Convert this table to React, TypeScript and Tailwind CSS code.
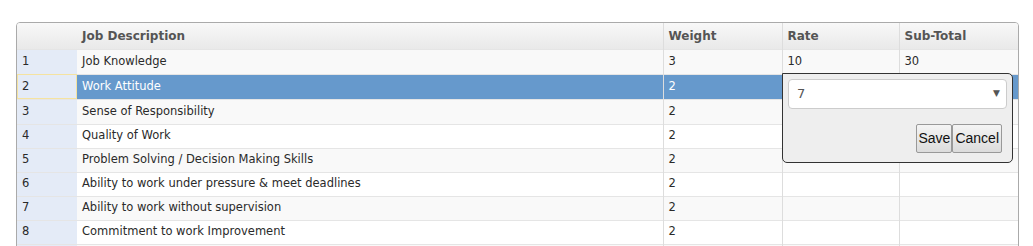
import React from 'react';

const rows = [
  { n: '1', desc: 'Job Knowledge', weight: '3', rate: '10', sub: '30' },
  { n: '2', desc: 'Work Attitude', weight: '2', rate: '', sub: '' },
  { n: '3', desc: 'Sense of Responsibility', weight: '2', rate: '', sub: '' },
  { n: '4', desc: 'Quality of Work', weight: '2', rate: '', sub: '' },
  { n: '5', desc: 'Problem Solving / Decision Making Skills', weight: '2', rate: '', sub: '' },
  { n: '6', desc: 'Ability to work under pressure & meet deadlines', weight: '2', rate: '', sub: '' },
  { n: '7', desc: 'Ability to work without supervision', weight: '2', rate: '', sub: '' },
  { n: '8', desc: 'Commitment to work Improvement', weight: '2', rate: '', sub: '' },
  // next row is cut off by the window edge
  { n: '', desc: '', weight: '', rate: '', sub: '' },
];

function EditPopup() {
  return (
    <div className="absolute left-[782px] top-[73px] w-[231px] h-[90px] bg-[#eeeeee] border border-[#333] rounded-b-[5px] rounded-tr-[5px] px-[5px] pt-[5px]">
      <div className="flex items-center justify-between h-[30px] bg-white border border-[#ccc] rounded-[4px] pl-[8px] pr-[6px] text-[13px] text-[#555] font-['DejaVu_Sans',sans-serif]">
        <span>7</span>
        <span className="text-[9px] text-[#555]">▼</span>
      </div>
      <div className="flex justify-end pr-[5px] pt-[15px] font-['Liberation_Sans',Arial,sans-serif] text-[14px] text-[#111]">
        <button className="h-[29px] px-[1px] border border-[#999] bg-gradient-to-b from-[#f4f4f4] to-[#dcdcdc] rounded-[2px]">Save</button>
        <button className="h-[29px] px-[2px] border border-[#999] bg-gradient-to-b from-[#f4f4f4] to-[#dcdcdc] rounded-[2px]">Cancel</button>
      </div>
    </div>
  );
}

export default function App() {
  return (
    <div className="relative w-[1033px] h-[246px] overflow-hidden bg-white font-['DejaVu_Sans',sans-serif] text-[11.5px] text-[#2a2a2a]">
      <div className="absolute left-[16px] top-[22px] w-[1003px] border border-[#aaa] rounded-t-[4px] overflow-hidden">
        <table className="w-full border-collapse table-fixed">
          <colgroup>
            <col className="w-[60px]" />
            <col className="w-[586px]" />
            <col className="w-[119px]" />
            <col className="w-[117px]" />
            <col />
          </colgroup>
          <thead>
            <tr className="h-[26px] bg-gradient-to-b from-[#f8f8f8] to-[#e9e9e9] text-[#555] font-bold text-[12px]">
              <th />
              <th className="text-left pl-[5px] border-r border-[#ddd]">Job Description</th>
              <th className="text-left pl-[5px] border-r border-[#ddd]">Weight</th>
              <th className="text-left pl-[5px] border-r border-[#ddd]">Rate</th>
              <th className="text-left pl-[5px]">Sub-Total</th>
            </tr>
          </thead>
          <tbody>
            {rows.map((r, i) => {
              const sel = r.n === '2';
              const stripe = i % 2 === 0 ? 'bg-[#f9f9f9]' : 'bg-white';
              const cell = sel ? 'bg-[#6699cc] text-white' : stripe;
              return (
                <tr key={i} className={`${i < 3 ? 'h-[25px]' : 'h-[24px]'} border-t border-[#e5e5e5]`}>
                  <td className={`pl-[5px] bg-[#e4ebf7] ${sel ? 'outline outline-1 -outline-offset-1 outline-[#f5e3a0]' : ''}`}>{r.n}</td>
                  <td className={`pl-[5px] border-r border-[#ddd] ${cell}`}>{r.desc}</td>
                  <td className={`pl-[5px] border-r border-[#ddd] ${cell}`}>{r.weight}</td>
                  <td className={`pl-[5px] border-r border-[#ddd] ${cell}`}>{r.rate}</td>
                  <td className={`pl-[5px] ${cell}`}>{r.sub}</td>
                </tr>
              );
            })}
          </tbody>
        </table>
      </div>
      <EditPopup />
    </div>
  );
}
